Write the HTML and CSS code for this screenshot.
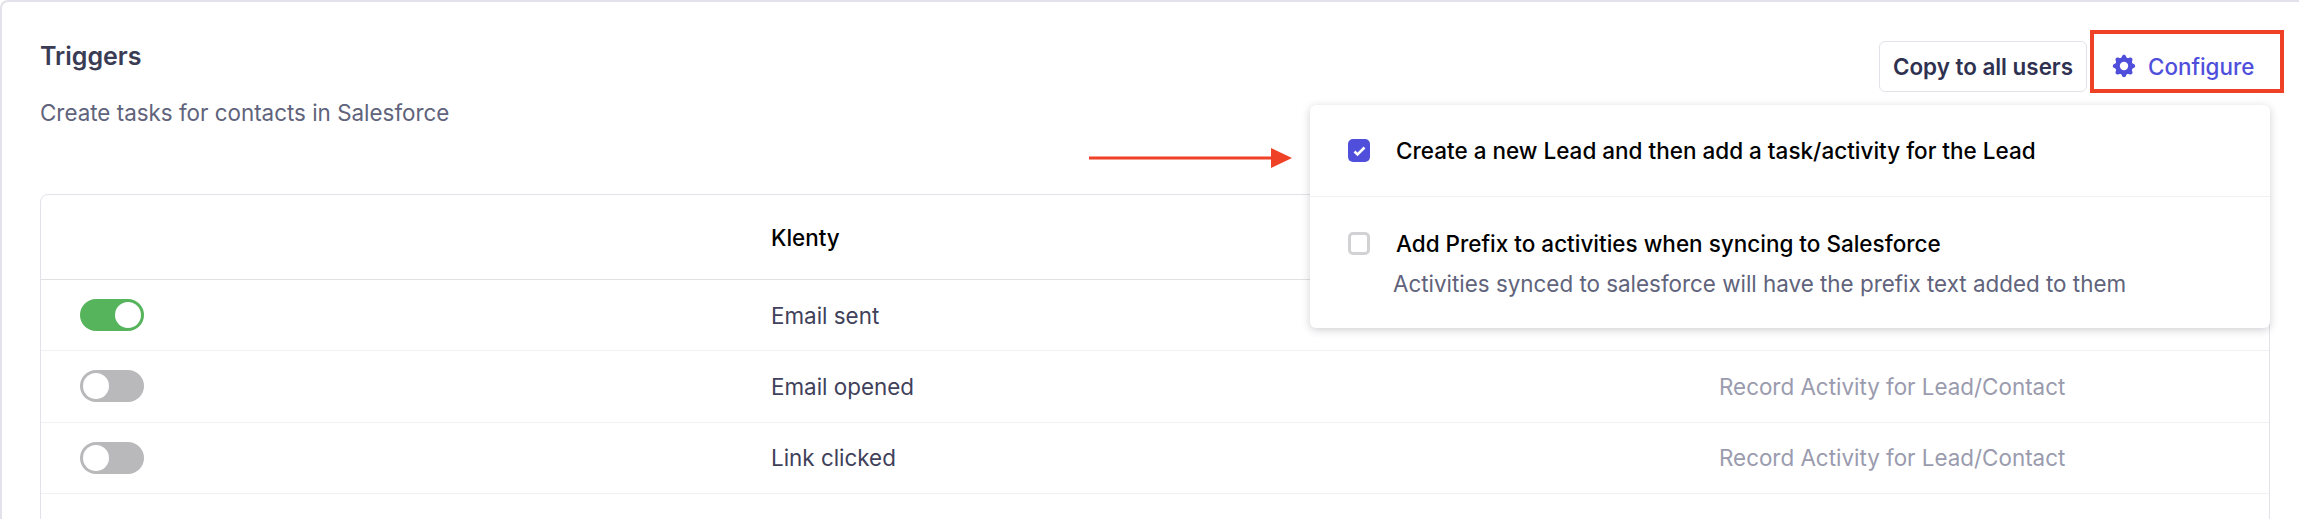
FILE: index.html
```html
<!DOCTYPE html>
<html lang="en">
<head>
    <meta charset="UTF-8">
    <meta name="viewport" content="width=device-width, initial-scale=1.0">
    <title>Triggers</title>
    <link rel="stylesheet" href="styles.css">
</head>
<body>
    <div class="card">
        <div class="card-head">
            <div>
                <h2>Triggers</h2>
                <p class="subtitle">Create tasks for contacts in Salesforce</p>
            </div>
            <div class="actions">
                <button class="btn-copy">Copy to all users</button>
                <button class="btn-configure">
                    <svg class="gear" viewBox="0 0 20 20" width="28" height="28">
                        <path fill-rule="evenodd" clip-rule="evenodd" d="M11.49 3.17c-.38-1.56-2.6-1.56-2.98 0a1.532 1.532 0 01-2.286.948c-1.372-.836-2.942.734-2.106 2.106.54.886.061 2.042-.947 2.287-1.561.379-1.561 2.6 0 2.978a1.532 1.532 0 01.947 2.287c-.836 1.372.734 2.942 2.106 2.106a1.532 1.532 0 012.287.947c.379 1.561 2.6 1.561 2.978 0a1.533 1.533 0 012.287-.947c1.372.836 2.942-.734 2.106-2.106a1.533 1.533 0 01.947-2.287c1.561-.379 1.561-2.6 0-2.978a1.532 1.532 0 01-.947-2.287c.836-1.372-.734-2.942-2.106-2.106a1.532 1.532 0 01-2.287-.947zM10 13a3 3 0 100-6 3 3 0 000 6z"/>
                    </svg>
                    Configure
                </button>
            </div>
        </div>

        <div class="table">
            <div class="row row-head">
                <div></div>
                <div>Klenty</div>
                <div></div>
            </div>
            <div class="row">
                <div><span class="toggle on"></span></div>
                <div>Email sent</div>
                <div></div>
            </div>
            <div class="row">
                <div><span class="toggle"></span></div>
                <div>Email opened</div>
                <div class="muted">Record Activity for Lead/Contact</div>
            </div>
            <div class="row">
                <div><span class="toggle"></span></div>
                <div>Link clicked</div>
                <div class="muted">Record Activity for Lead/Contact</div>
            </div>
        </div>

        <div class="popup">
            <div class="popup-item">
                <span class="check checked">
                    <svg viewBox="0 0 22 23" width="22" height="23">
                        <path d="M6.500 12.500l3 3 7-7" fill="none" stroke="#fff" stroke-width="2.600"/>
                    </svg>
                </span>
                <span class="popup-label">Create a new Lead and then add a task/activity for the Lead</span>
            </div>
            <div class="popup-item second">
                <span class="check"></span>
                <span class="popup-label">Add Prefix to activities when syncing to Salesforce</span>
                <p class="popup-desc">Activities synced to salesforce will have the prefix text added to them</p>
            </div>
        </div>

        <div class="highlight"></div>
        <svg class="arrow" viewBox="0 0 204 22" width="204" height="22">
            <path d="M0 9.500h184v3H0z" fill="#ee4126"/>
            <path d="M182 1l21 10-21 10z" fill="#ee4126"/>
        </svg>
    </div>
</body>
</html>
```

FILE: styles.css
```css
* {
    box-sizing: border-box;
}
html, body {
    height: 100%;
}
body {
    margin: 0;
    overflow: hidden;
    background-color: #fff;
    font-family: Inter, "Liberation Sans", sans-serif;
    font-size: 22.4px;
    color: #3f415a;
}
.card {
    position: relative;
    height: 100%;
    padding: 0 0 0 38px;
    border-top: 2px solid #e2e2ea;
    border-left: 2px solid #e2e2ea;
    border-top-left-radius: 8px;
    overflow: hidden;
}
.card-head {
    display: flex;
    justify-content: space-between;
    align-items: flex-start;
    padding-right: 15px;
    height: 192px;
}
h2 {
    margin: 39px 0 0;
    font-size: 25px;
    font-weight: 600;
    line-height: 30px;
    color: #3a3c55;
}
.subtitle {
    margin: 27px 0 0;
    line-height: 30px;
    color: #60637b;
}
.actions {
    display: flex;
    align-items: flex-start;
    gap: 3px;
    margin-top: 28px;
}
button {
    font-family: inherit;
    font-size: 22.4px;
    background: #fff;
    cursor: pointer;
}
.btn-copy {
    width: 208px;
    height: 51px;
    margin-top: 11px;
    padding: 0;
    border: 1px solid #e2e2e8;
    border-radius: 6px;
    font-weight: 600;
    color: #2f3150;
}
.btn-configure {
    display: flex;
    align-items: center;
    gap: 10px;
    width: 194px;
    height: 63px;
    padding: 9px 0 0 20px;
    border: 0;
    font-weight: 500;
    color: #4f4fdc;
}
.gear {
    fill: #4f4fdc;
}
.table {
    width: 2230px;
    height: 400px;
    border: 1px solid #e2e2e8;
    border-radius: 8px 8px 0 0;
}
.row {
    display: grid;
    grid-template-columns: 730px 948px 1fr;
    align-items: center;
    height: 71.33px;
    border-bottom: 1px solid #f1f1f4;
}
.row > div:first-child {
    padding-left: 39px;
}
.row-head {
    height: 85px;
    border-bottom-color: #e0e0e5;
    font-weight: 500;
    color: #000;
}
.muted {
    color: #9a9bae;
}
.toggle {
    display: block;
    position: relative;
    width: 64px;
    height: 32px;
    border-radius: 16px;
    background-color: #b9b9bb;
}
.toggle::after {
    content: "";
    position: absolute;
    top: 3px;
    left: 3px;
    width: 26px;
    height: 26px;
    border-radius: 50%;
    background-color: #fff;
}
.toggle.on {
    background-color: #56b45c;
}
.toggle.on::after {
    left: 35px;
}
.popup {
    position: absolute;
    top: 103px;
    left: 1308px;
    width: 960px;
    height: 223px;
    background-color: #fff;
    border-radius: 6px;
    box-shadow: 0 2px 8px rgba(40, 40, 60, 0.22);
    color: #000;
}
.popup-item {
    display: flex;
    flex-wrap: wrap;
    align-items: center;
    gap: 0 26px;
    height: 92px;
    padding: 0 38px;
    border-bottom: 1px solid #f1f1f4;
}
.popup-label {
    font-size: 22.5px;
    font-weight: 500;
}
.popup-item.second {
    height: auto;
    padding-top: 33px;
    border-bottom: 0;
}
.check {
    display: block;
    width: 22px;
    height: 23px;
    border: 3px solid #d2d2d4;
    border-radius: 5px;
}
.check.checked {
    border: 0;
    background-color: #4f4fdc;
}
.check svg {
    display: block;
}
.popup-desc {
    width: 100%;
    margin: 13px 0 0 45px;
    line-height: 27px;
    color: #60637b;
}
.highlight {
    position: absolute;
    top: 28px;
    left: 2088px;
    width: 194px;
    height: 63px;
    border: 4px solid #ee4126;
}
.arrow {
    position: absolute;
    top: 145px;
    left: 1087px;
}
```
